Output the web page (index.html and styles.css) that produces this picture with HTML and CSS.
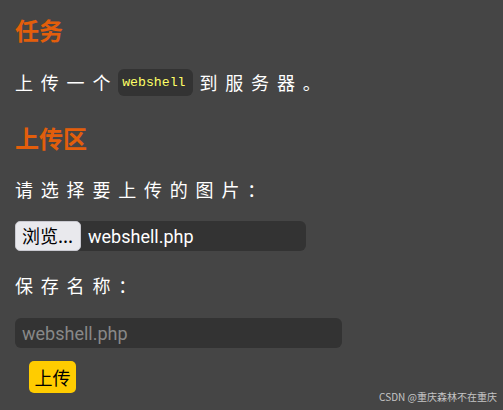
FILE: index.html
```html
<!DOCTYPE html>
<html lang="zh">
<head>
<meta charset="utf-8">
<link rel="stylesheet" href="styles.css">
</head>
<body>
<main class="page">
  <h2 class="title">任务</h2>
  <p class="line task">上传一个<code class="code">webshell</code>到服务器。</p>
  <h2 class="title second">上传区</h2>
  <p class="line pick">请选择要上传的图片：</p>
  <div class="file">
    <span class="browse">浏览...</span>
    <span class="fname">webshell.php</span>
  </div>
  <p class="line save">保存名称：</p>
  <div class="textbox"><span class="placeholder">webshell.php</span></div>
  <button class="submit">上传</button>
</main>
<div class="mark">CSDN @重庆森林不在重庆</div>
</body>
</html>
```

FILE: styles.css
```css
html, body {
  margin: 0;
  padding: 0;
  background: #454545;
  width: 503px;
  height: 410px;
  overflow: hidden;
}
body {
  font-family: "Noto Sans CJK SC", "Noto Sans", sans-serif;
  color: #ffffff;
  position: relative;
}
.page {
  display: flex;
  flex-direction: column;
  align-items: flex-start;
  padding: 15px 0 0 15px;
}
.title {
  margin: 0;
  font-size: 24px;
  line-height: 30px;
  font-weight: 700;
  color: #e35e0b;
}
.second {
  margin-top: 26px;
}
.line {
  margin: 0;
  font-size: 18px;
  line-height: 30px;
  letter-spacing: 7.8px;
  color: #ffffff;
}
.task {
  margin-top: 22px;
  display: flex;
  align-items: center;
}
.code {
  font-family: "Liberation Mono", monospace;
  font-size: 13.2px;
  letter-spacing: 0;
  color: #ffff66;
  background: #333333;
  border-radius: 6px;
  padding: 0 7px 0 4px;
  height: 27px;
  line-height: 27px;
  margin-right: 7px;
}
.pick {
  margin-top: 21px;
}
.file {
  margin-top: 17px;
  width: 291px;
  height: 30px;
  background: #333333;
  border-radius: 6px;
  display: flex;
  align-items: center;
}
.browse {
  box-sizing: border-box;
  height: 30px;
  width: 66px;
  background: #e9e9ed;
  border: 1px solid #c9c9d0;
  border-radius: 5px;
  color: #000;
  font-size: 18px;
  line-height: 27px;
  padding-left: 6px;
}
.fname {
  font-family: Roboto, sans-serif;
  font-size: 18px;
  color: #fff;
  margin-left: 7px;
}
.save {
  margin-top: 19px;
}
.textbox {
  margin-top: 18px;
  width: 327px;
  height: 30px;
  background: #333333;
  border-radius: 6px;
  display: flex;
  align-items: center;
}
.placeholder {
  font-family: Roboto, sans-serif;
  font-size: 18px;
  color: #888888;
  margin-left: 7px;
}
.submit {
  margin: 13px 0 0 14px;
  width: 47px;
  height: 32px;
  border: none;
  border-radius: 5px;
  background: #ffcc00;
  color: #000;
  font-family: "Noto Sans CJK SC", sans-serif;
  font-size: 18px;
  padding: 0;
}
.mark {
  position: absolute;
  right: 6px;
  top: 390px;
  font-family: "Noto Sans CJK SC", sans-serif;
  font-size: 10px;
  color: #c6c6c6;
  line-height: 14px;
}
```
